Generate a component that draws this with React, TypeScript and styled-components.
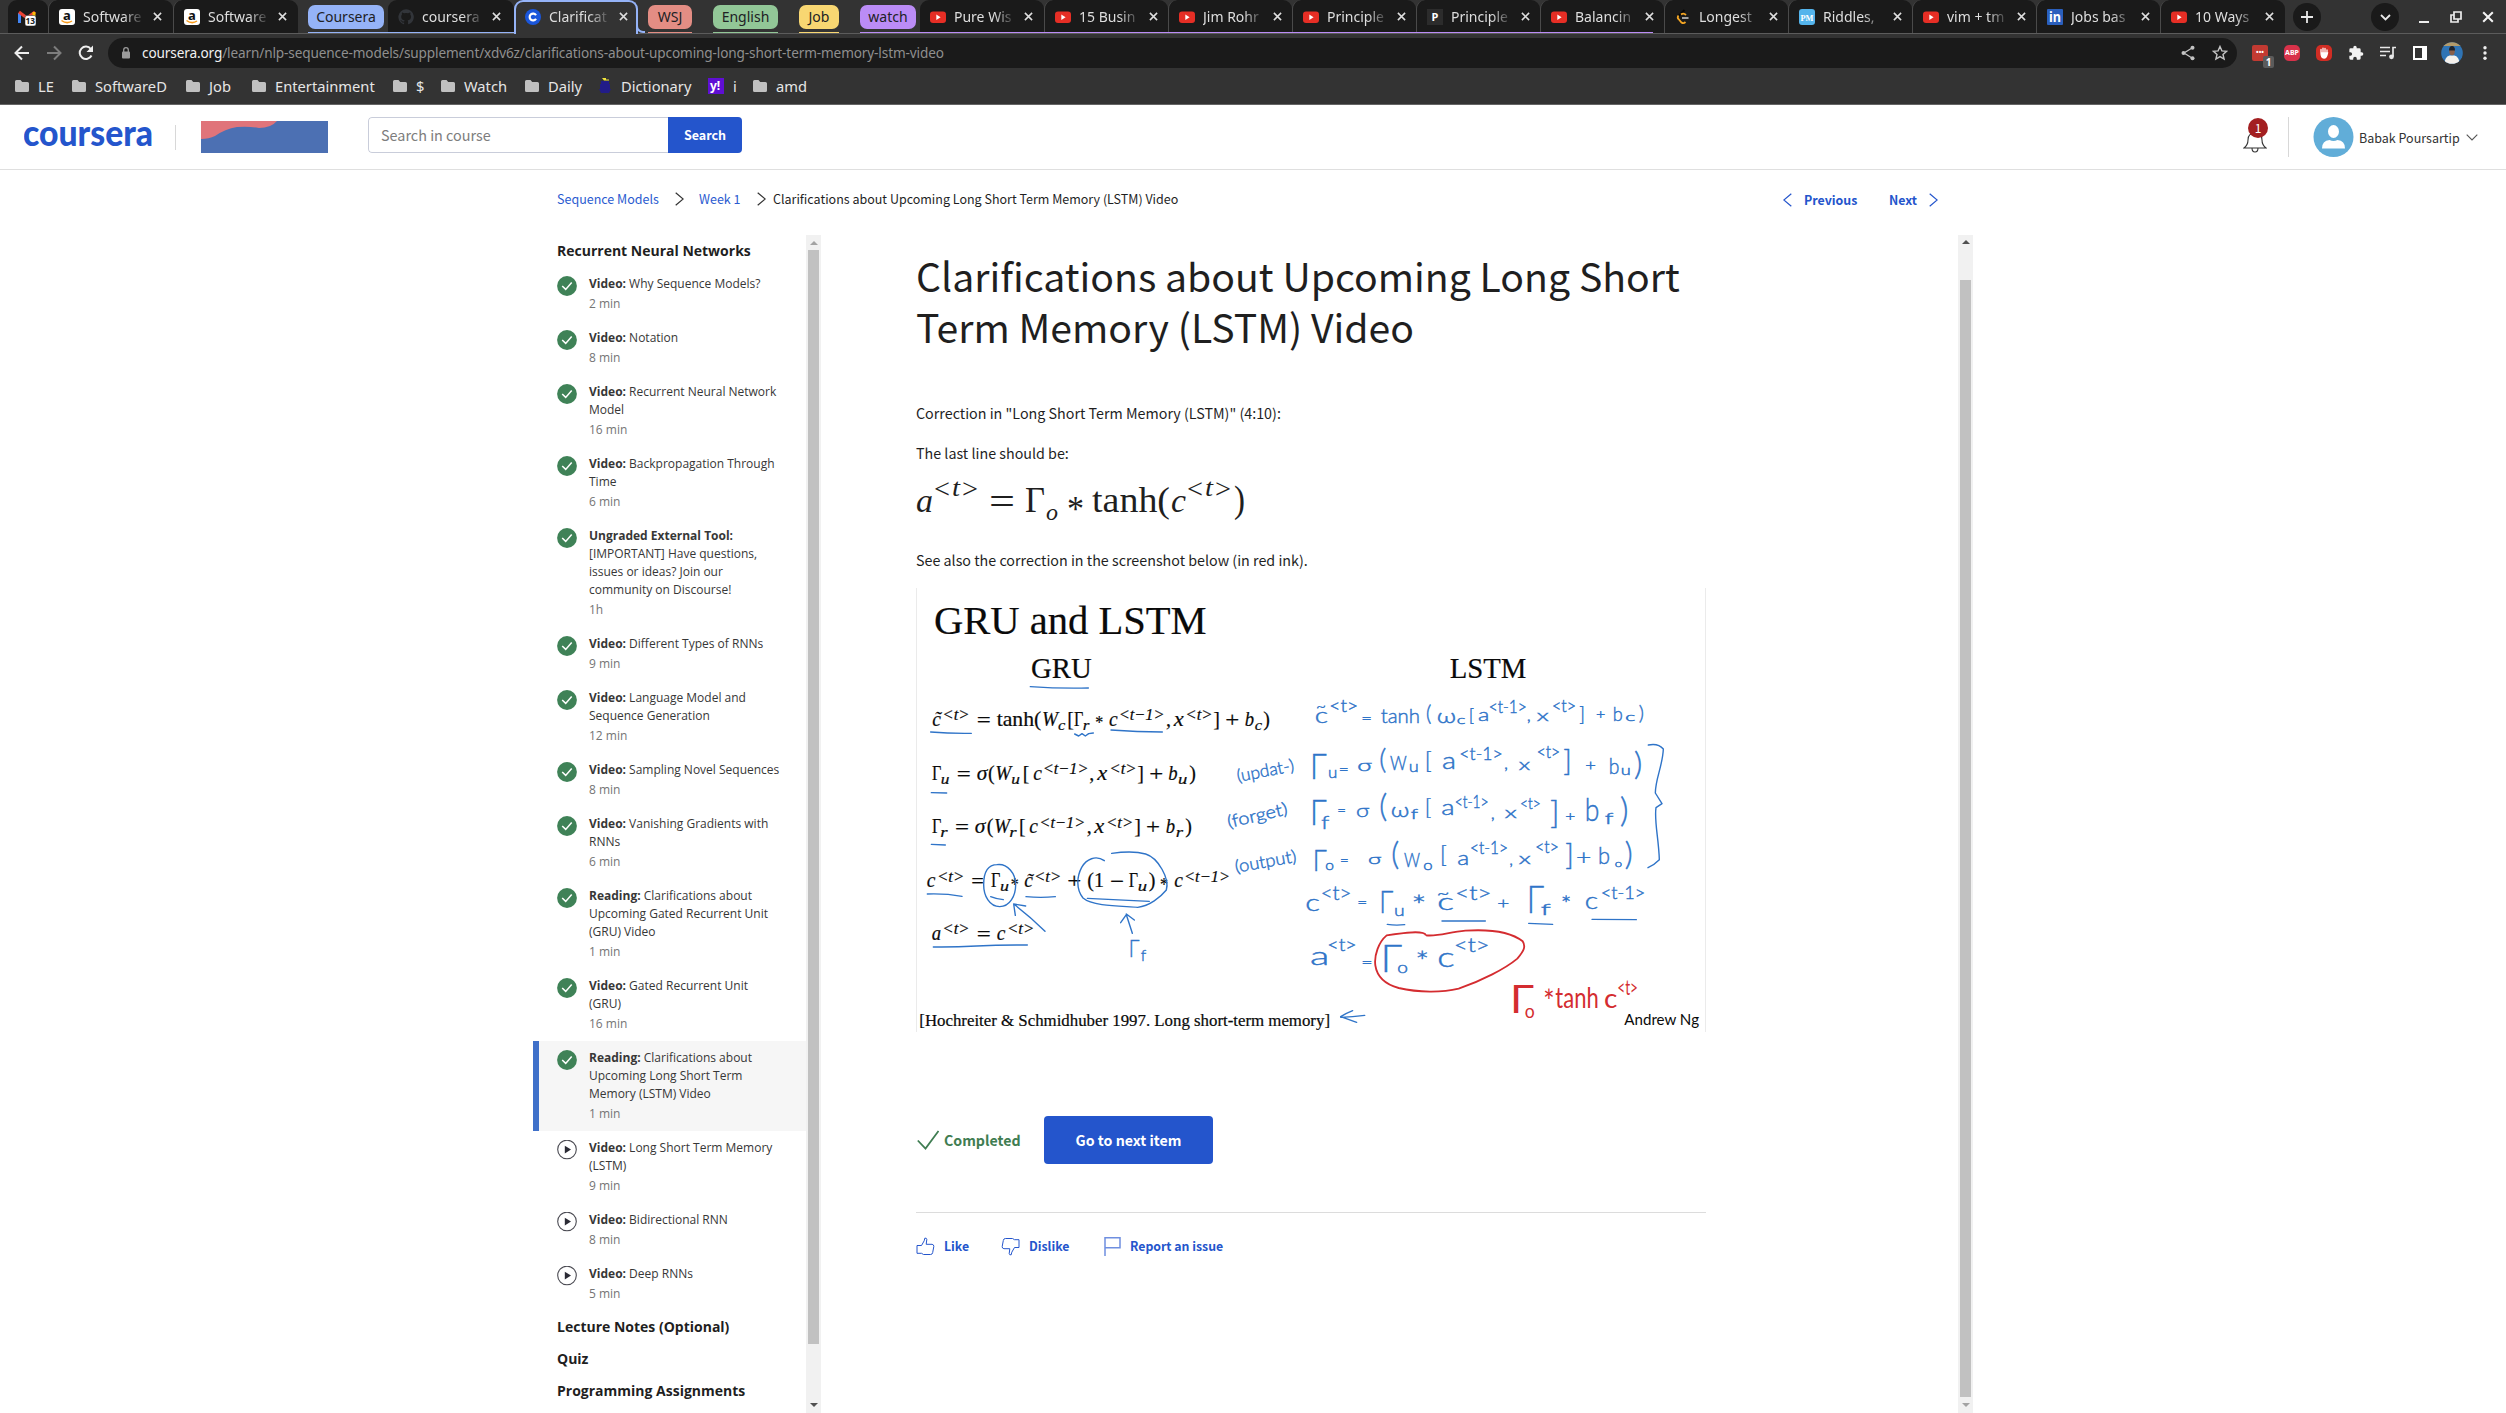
import React from 'react';
import styled, { createGlobalStyle } from 'styled-components';

const SOURCE = `'Noto Sans CJK SC', 'Open Sans', sans-serif`;
const OPEN = `'Open Sans', 'Noto Sans', sans-serif`;
const CHROME = `'Noto Sans', 'Open Sans', sans-serif`;
const SERIF = `'Liberation Serif', serif`;
const HAND = `Lato, 'Open Sans', sans-serif`;

const Global = createGlobalStyle`
  * { box-sizing: border-box; }
  body { margin: 0; background: #fff; overflow: hidden; }
  svg { display: block; flex: none; }
`;

const Page = styled.div`
  width: 2506px;
  height: 1413px;
  display: flex;
  flex-direction: column;
  overflow: hidden;
  background: #fff;
  color: #1f1f1f;
  font-family: ${SOURCE};
`;

/* ---------- browser chrome ---------- */

const Chrome = styled.div`
  height: 105px;
  flex: none;
  background: #333;
  border-bottom: 1px solid #656565;
  font-family: ${CHROME};
`;

const TabStrip = styled.div`
  height: 34px;
  display: flex;
  padding-left: 8px;
  border-bottom: 1px solid #5c5c5c;
`;

const TabBox = styled.div<{ $w: number; $active?: boolean; $first?: boolean }>`
  position: relative;
  width: ${p => p.$w}px;
  height: ${p => (p.$active ? 34 : 33)}px;
  flex: none;
  display: flex;
  align-items: center;
  padding: 0 0 ${p => (p.$active ? 3 : 0)}px ${p => (p.$active ? 9 : 10)}px;
  background: ${p => (p.$active ? '#333' : '#1a1a1a')};
  border: ${p => (p.$active ? '2px solid #95b3f7' : '0')};
  border-bottom: 0;
  border-radius: 9px 9px 0 0;
  border-left: ${p => (p.$active ? '2px solid #95b3f7' : p.$first ? '0' : '1px solid #4a4a4a')};
  z-index: ${p => (p.$active ? 2 : 0)};
`;

const TabTitle = styled.span`
  width: 62px;
  margin-left: 8px;
  overflow: hidden;
  white-space: nowrap;
  color: #dedede;
  font-size: 14px;
  line-height: 20px;
  mask-image: linear-gradient(90deg, #000 65%, transparent 100%);
`;

const TabClose = styled.span`
  display: flex;
  margin-left: 8px;
`;

const Group = styled.div<{ $ml: number; $bar: number; $c: string }>`
  position: relative;
  display: flex;
  margin-left: ${p => p.$ml}px;
  height: 33px;
  &::after {
    content: '';
    position: absolute;
    left: 0;
    bottom: 0;
    height: 1.5px;
    width: ${p => p.$bar}px;
    background: ${p => p.$c};
    z-index: 1;
  }
`;

const Chip = styled.span<{ $w: number; $c: string; $gap?: number }>`
  width: ${p => p.$w}px;
  height: 24px;
  margin: 5px ${p => p.$gap || 0}px 0 0;
  flex: none;
  border-radius: 7px;
  background: ${p => p.$c};
  color: #202124;
  font-size: 14px;
  line-height: 24px;
  text-align: center;
`;

const Foot = styled.span`
  width: 9px;
  height: 8px;
  align-self: flex-end;
  border-left: 2px solid #95b3f7;
  border-bottom: 2px solid #95b3f7;
  border-radius: 0 0 0 7px;
  margin-left: -2px;
`;

const Round = styled.span<{ $ml: number }>`
  width: 28px;
  height: 28px;
  margin: 3px 0 0 ${p => p.$ml}px;
  border-radius: 50%;
  background: #1a1a1a;
  display: flex;
  align-items: center;
  justify-content: center;
`;

const WindowIcons = styled.div`
  display: flex;
  align-items: center;
  gap: 20px;
  margin-left: 19px;
`;

const Toolbar = styled.div`
  height: 38px;
  display: flex;
  align-items: center;
  padding: 0 12px 0 12px;
`;

const NavIcons = styled.div`
  width: 96px;
  display: flex;
  gap: 12px;
`;

const Omnibox = styled.div`
  width: 2129px;
  height: 30px;
  border-radius: 15px;
  background: #1a1a1a;
  display: flex;
  align-items: center;
  padding: 0 9px 0 13px;
  color: #8f8f8f;
  font-size: 13.6px;
  line-height: 20px;
  b { color: #f1f1f1; font-weight: 400; }
`;

const UrlText = styled.span`
  margin-left: 11px;
  flex: 1;
  letter-spacing: -0.125px;
`;

const PillIcons = styled.div`
  display: flex;
  gap: 16px;
`;

const Extensions = styled.div`
  display: flex;
  align-items: center;
  margin-left: 15px;
  gap: 16px;
`;

const Ext = styled.span<{ $bg?: string; $r?: number }>`
  position: relative;
  width: 16px;
  height: 16px;
  border-radius: ${p => p.$r || 0}px;
  background: ${p => p.$bg || 'transparent'};
  color: #fff;
  font: 700 7px/16px ${CHROME};
  text-align: center;
`;

const ExtBadge = styled.span`
  position: absolute;
  right: -6px;
  bottom: -7px;
  width: 11px;
  height: 12px;
  border-radius: 2px;
  background: #5b5b5b;
  font: 700 10px/12px ${CHROME};
`;

const ProfileIcons = styled.div`
  display: flex;
  align-items: center;
  gap: 14px;
  margin-left: -3px;
`;

const Bookmarks = styled.div`
  height: 28px;
  display: flex;
  align-items: center;
  padding: 0 0 0 15px;
  color: #e6e6e6;
  font-size: 14.7px;
  line-height: 20px;
`;

const Bookmark = styled.span<{ $w: number }>`
  width: ${p => p.$w}px;
  display: flex;
  align-items: center;
  gap: 9px;
  white-space: nowrap;
`;

/* ---------- site header ---------- */

const SiteHeader = styled.header`
  height: 65px;
  flex: none;
  display: flex;
  align-items: center;
  padding: 0 28px 0 24px;
  border-bottom: 1px solid #dfdfdf;
`;

const VLine = styled.span<{ $h: number; $ml: number; $mr: number }>`
  width: 1px;
  height: ${p => p.$h}px;
  background: #d8d8d8;
  margin: 0 ${p => p.$mr}px 0 ${p => p.$ml}px;
`;

const SearchForm = styled.div`
  display: flex;
  width: 374px;
  height: 36px;
  margin: 0 0 4px 40px;
  border-radius: 4px;
  overflow: hidden;
`;

const SearchInput = styled.div`
  width: 300px;
  border: 1px solid #c9cdda;
  border-right: 0;
  border-radius: 4px 0 0 4px;
  padding-left: 12px;
  color: #7d7d7d;
  font-size: 14.4px;
  line-height: 33px;
`;

const SearchButton = styled.div`
  flex: 1;
  background: #2455cc;
  color: #fff;
  font-size: 12.5px;
  font-weight: 700;
  line-height: 35px;
  text-align: center;
`;

const HeaderRight = styled.div`
  margin-left: auto;
  display: flex;
  align-items: center;
`;

const Bell = styled.div`
  position: relative;
  width: 24px;
  height: 40px;
  padding-top: 10px;
`;

const BellBadge = styled.span`
  position: absolute;
  left: 5px;
  top: 1px;
  width: 20px;
  height: 20px;
  border-radius: 50%;
  background: #a31f21;
  color: #fff;
  font-size: 12px;
  line-height: 19px;
  text-align: center;
`;

const UserName = styled.span`
  width: 101px;
  margin: 2px 6px 0 5px;
  white-space: nowrap;
  color: #333;
  font-size: 12.5px;
  line-height: 20px;
`;

/* ---------- course body ---------- */

const CrumbBar = styled.div`
  height: 65px;
  flex: none;
  display: flex;
  align-items: center;
  padding: 0 568px 7px 557px;
  font-size: 12.5px;
  line-height: 20px;
  white-space: nowrap;
`;

const Crumb = styled.span<{ $w: number; $link?: boolean }>`
  width: ${p => p.$w}px;
  color: ${p => (p.$link ? '#2a5bd0' : '#1f1f1f')};
`;

const CrumbSep = styled.span<{ $ml: number; $mr: number }>`
  margin: 0 ${p => p.$mr}px 0 ${p => p.$ml}px;
`;

const Pager = styled.div`
  display: flex;
  align-items: center;
  margin: 1px 0 0 auto;
  color: #2455cc;
  font-size: 12.4px;
  font-weight: 700;
`;

const PagerText = styled.span<{ $w: number; $ml: number; $mr: number }>`
  width: ${p => p.$w}px;
  margin: 0 ${p => p.$mr}px 0 ${p => p.$ml}px;
`;

const Columns = styled.div`
  flex: 1;
  min-height: 0;
  display: flex;
  padding-left: 533px;
`;

const Sidebar = styled.nav`
  width: 273px;
  font-family: ${OPEN};
`;

const SectionTitle = styled.div`
  height: 32px;
  padding-left: 24px;
  color: #1f1f1f;
  font-size: 14px;
  font-weight: 700;
  line-height: 32px;
  white-space: nowrap;
`;

const Item = styled.div<{ $active?: boolean }>`
  display: flex;
  align-items: flex-start;
  padding: 8px 0 8px 18px;
  border-left: 6px solid ${p => (p.$active ? '#3f70c9' : 'transparent')};
  background: ${p => (p.$active ? '#f6f6f6' : 'transparent')};
  background-clip: padding-box;
  svg { margin-top: 1px; }
`;

const ItemText = styled.div`
  margin-left: 12px;
  color: #373737;
  font-size: 12px;
  line-height: 18px;
  white-space: nowrap;
`;

const Line = styled.div`
  height: 18px;
`;

const Duration = styled.div`
  margin-top: 2px;
  color: #757575;
`;

const Track = styled.div`
  width: 15px;
  height: 1178px;
  flex: none;
  display: flex;
  flex-direction: column;
  align-items: center;
  background: #f1f1f1;
`;

const Thumb = styled.div<{ $mt: number; $h: number }>`
  width: 11px;
  height: ${p => p.$h}px;
  margin-top: ${p => p.$mt}px;
  background: #c1c1c1;
`;

const ArrowBox = styled.div<{ $bottom?: boolean }>`
  height: 15px;
  margin: ${p => (p.$bottom ? 'auto 0 1px' : '0')};
  display: flex;
  align-items: center;
`;

const Main = styled.main`
  width: 1137px;
  padding: 15px 252px 0 95px;
`;

const Title = styled.h1`
  margin: 0;
  color: #1f1f1f;
  font-size: 39.2px;
  font-weight: 400;
  line-height: 51px;
  white-space: nowrap;
`;

const Para = styled.p<{ $mt: number }>`
  margin: ${p => p.$mt}px 0 0;
  font-size: 14.3px;
  line-height: 20px;
  white-space: nowrap;
`;

const FormulaBox = styled.div`
  margin-top: 8px;
  height: 69px;
`;

const SlideFrame = styled.div`
  width: 790px;
  height: 444px;
  margin-top: 18px;
  border-left: 1px solid #ebebeb;
  border-right: 1px solid #ebebeb;
`;

const Actions = styled.div`
  height: 48px;
  margin-top: 84px;
  display: flex;
  align-items: center;
  padding-left: 1px;
`;

const Done = styled.span`
  width: 100px;
  margin-left: 5px;
  color: #3f7d52;
  font-size: 14.2px;
  font-weight: 700;
  line-height: 20px;
`;

const NextButton = styled.div`
  width: 169px;
  height: 48px;
  border-radius: 4px;
  background: #2455cc;
  color: #fff;
  font-size: 14.2px;
  font-weight: 700;
  line-height: 48px;
  text-align: center;
`;

const Feedback = styled.div`
  margin-top: 48px;
  border-top: 1px solid #dcdcdc;
  padding: 23px 0 0 0;
  display: flex;
  color: #2455cc;
  font-size: 12.3px;
  font-weight: 700;
  line-height: 20px;
`;

const FeedbackItem = styled.span<{ $w: number; $gap: number }>`
  width: ${p => p.$w}px;
  display: flex;
  align-items: center;
  gap: ${p => p.$gap}px;
  white-space: nowrap;
`;

/* ---------- small icons ---------- */

const CloseIcon = ({ size = 9, color = '#dedede' }: { size?: number; color?: string }) => (
  <svg width={size} height={size} viewBox="0 0 10 10"><path d="M1 1l8 8M9 1L1 9" stroke={color} strokeWidth="1.7" /></svg>
);

const favicons: Record<string, React.ReactNode> = {
  gmail: (
    <svg width="18" height="18" viewBox="0 0 18 18">
      <path d="M1.500 15V5" stroke="#4285f4" strokeWidth="3" />
      <path d="M1 4l8 6 8-6" fill="none" stroke="#ea4335" strokeWidth="3" />
      <path d="M16 8V4" stroke="#fbbc04" strokeWidth="3" />
      <rect x="7" y="7.500" width="11" height="10.500" rx="2" fill="#fff" stroke="#222" strokeWidth=".5" />
      <text x="7.600" y="16.200" fontSize="9" fontWeight="700" fontFamily={CHROME} textLength="9.500" lengthAdjust="spacingAndGlyphs" fill="#222">13</text>
    </svg>
  ),
  amazon: (
    <svg width="16" height="16" viewBox="0 0 16 16">
      <rect width="16" height="16" rx="3" fill="#fff" />
      <text x="4" y="11" fontSize="13" fontWeight="700" fontFamily={CHROME} fill="#111">a</text>
      <path d="M2.500 11.500q5.500 4 10.500.5" fill="none" stroke="#f79a1c" strokeWidth="1.500" />
    </svg>
  ),
  github: (
    <svg width="16" height="16" viewBox="0 0 24 24" fill="#32353a">
      <path d="M12 .5A11.500 11.500 0 0 0 8.400 22.900c.6.100.8-.3.800-.6v-2c-3.200.7-3.900-1.500-3.900-1.500-.5-1.300-1.300-1.700-1.300-1.700-1-.7.100-.7.100-.7 1.200.100 1.800 1.200 1.800 1.200 1 1.800 2.700 1.300 3.400 1 .1-.8.400-1.300.7-1.600-2.500-.3-5.200-1.300-5.200-5.700 0-1.300.4-2.300 1.200-3.100-.1-.3-.5-1.500.1-3.100 0 0 1-.3 3.200 1.200a11 11 0 0 1 5.800 0c2.200-1.500 3.200-1.200 3.200-1.200.6 1.600.2 2.800.1 3.100.7.800 1.200 1.800 1.200 3.100 0 4.400-2.700 5.400-5.300 5.700.4.400.8 1.100.8 2.200v3.100c0 .3.200.7.800.6A11.500 11.500 0 0 0 12 .5" />
    </svg>
  ),
  coursera: (
    <svg width="16" height="16" viewBox="0 0 16 16">
      <circle cx="8" cy="8" r="8" fill="#1a56db" />
      <path d="M11 6.300A3.400 3.400 0 1 0 11 9.700" fill="none" stroke="#fff" strokeWidth="2.200" />
    </svg>
  ),
  youtube: (
    <svg width="16" height="16" viewBox="0 0 16 16">
      <rect y="2.500" width="16" height="11.500" rx="3" fill="#e62e25" />
      <path d="M6.300 5.500v5.400l4.300-2.700z" fill="#fff" />
    </svg>
  ),
  p: (
    <svg width="16" height="16" viewBox="0 0 16 16">
      <rect width="16" height="16" fill="#2c2c2c" />
      <text x="4.500" y="12" fontSize="11" fontWeight="700" fontFamily={CHROME} fill="#fff">P</text>
    </svg>
  ),
  leetcode: (
    <svg width="16" height="16" viewBox="0 0 16 16" fill="none" strokeWidth="1.800">
      <path d="M9.500 1L3.500 7" stroke="#070707" />
      <path d="M3.500 6.500q-1.500 2 0 3.500l3 3.500q2 1.500 4-.5M6 5.500q2.500-2 5 .5" stroke="#f5a623" />
      <path d="M7 9h6.500" stroke="#b3b3b3" />
    </svg>
  ),
  pm: (
    <svg width="16" height="16" viewBox="0 0 16 16">
      <rect width="16" height="16" rx="3" fill="#54b4ec" />
      <text x="1.500" y="11.500" fontSize="9" fontWeight="700" fontFamily={SERIF} fill="#fff" textLength="13" lengthAdjust="spacingAndGlyphs">PM</text>
    </svg>
  ),
  linkedin: (
    <svg width="16" height="16" viewBox="0 0 16 16">
      <rect width="16" height="16" rx="1" fill="#2a5fbd" />
      <text x="2" y="13" fontSize="14" fontWeight="700" fontFamily={CHROME} fill="#fff" textLength="12" lengthAdjust="spacingAndGlyphs">in</text>
    </svg>
  ),
};

const FolderIcon = () => (
  <svg width="14" height="12" viewBox="0 0 14 12"><path d="M0 1.500Q0 0 1.500 0h4l1.700 2H12.500Q14 2 14 3.500v7Q14 12 12.500 12h-11Q0 12 0 10.500z" fill="#c0c0c0" /></svg>
);

const ShipIcon = () => (
  <svg width="14" height="16" viewBox="0 0 14 16">
    <path d="M3 3h8v3h1v5h1l-2 4H3l-2-4h1V6h1z" fill="#221c88" />
    <path d="M4 0h4v1.500h3v1H6" fill="#f2e53b" />
  </svg>
);

const YahooIcon = () => (
  <svg width="16" height="16" viewBox="0 0 16 16">
    <rect width="16" height="16" fill="#5f0fd4" />
    <text x="2" y="11.500" fontSize="12" fontWeight="700" fontFamily={CHROME} fill="#fff">y!</text>
  </svg>
);

const Chevron = ({ w, h, left, color, sw = 1.2 }: { w: number; h: number; left?: boolean; color: string; sw?: number }) => (
  <svg width={w} height={h} viewBox={`0 0 ${w} ${h}`}>
    <path d={left ? `M${w - 0.7} .7L.8 ${h / 2}L${w - 0.7} ${h - 0.7}` : `M.7 .7L${w - 0.8} ${h / 2}L.7 ${h - 0.7}`} fill="none" stroke={color} strokeWidth={sw} />
  </svg>
);

const CheckDisc = () => (
  <svg width="20" height="20" viewBox="0 0 20 20">
    <circle cx="10" cy="10" r="9.900" fill="#3f8257" />
    <path d="M5.200 10l3.500 3.400 6-7" fill="none" stroke="#fff" strokeWidth="1.500" />
  </svg>
);

const PlayDisc = () => (
  <svg width="20" height="20" viewBox="0 0 20 20">
    <circle cx="10" cy="9.500" r="9.300" fill="#fff" stroke="#4a4a52" strokeWidth="1.100" />
    <path d="M7.800 5.800v7.600l6.200-3.800z" fill="#2b2b35" />
  </svg>
);

const ScrollArrow = ({ down, color }: { down?: boolean; color: string }) => (
  <svg width="8" height="4" viewBox="0 0 8 4"><path d={down ? 'M0 0h8L4 4z' : 'M0 4h8L4 0z'} fill={color} /></svg>
);

const ThumbIcon = ({ down }: { down?: boolean }) => (
  <svg width="19" height="19" viewBox="0 0 19 19" fill="none" stroke="#2455cc" strokeWidth="1">
    <path transform={down ? 'matrix(1 0 0 -1 0 19) matrix(-1 0 0 1 19 0)' : undefined} d="M1 8.500h4.500l2.700-4.700.6-2.600q1.700-.5 2 1.100l-.6 5h5.900q1.900.3 1.700 2.200l-1.100 6q-.3 2-2.100 2H7.500l-2-1.200H1z" />
  </svg>
);

const FlagIcon = () => (
  <svg width="17" height="19" viewBox="0 0 17 19"><path d="M1 19V.8h15v10H1" fill="none" stroke="#6f8fe0" strokeWidth="1.500" /></svg>
);

/* ---------- tabs ---------- */

type TabProps = { icon: string; title: string; w?: number; active?: boolean; first?: boolean };

const Tab = ({ icon, title, w = 124, active, first }: TabProps) => (
  <TabBox $w={w} $active={active} $first={first}>
    {favicons[icon]}
    <TabTitle>{title}</TabTitle>
    <TabClose><CloseIcon /></TabClose>
  </TabBox>
);

const bookmarks: { label: string; w: number; icon?: React.ReactNode }[] = [
  { label: 'LE', w: 57 },
  { label: 'SoftwareD', w: 114 },
  { label: 'Job', w: 66 },
  { label: 'Entertainment', w: 141 },
  { label: '$', w: 48 },
  { label: 'Watch', w: 84 },
  { label: 'Daily', w: 73 },
  { label: 'Dictionary', w: 110, icon: <ShipIcon /> },
  { label: 'i', w: 45, icon: <YahooIcon /> },
  { label: 'amd', w: 60 },
];

const BrowserChrome = () => (
  <Chrome>
    <TabStrip>
      <TabBox $w={40} $first>{favicons.gmail}</TabBox>
      <Tab icon="amazon" title="Software" w={125} />
      <Tab icon="amazon" title="Software" w={125} />
      <Group $ml={10} $bar={206} $c="#95b3f7">
        <Chip $w={76} $c="#95b3f7" $gap={4}>Coursera</Chip>
        <Tab icon="github" title="coursera" w={126} first />
        <Tab icon="coursera" title="Clarificat" active />
        <Foot />
      </Group>
      <Group $ml={3} $bar={44} $c="#e38d84"><Chip $w={44} $c="#e38d84">WSJ</Chip></Group>
      <Group $ml={21} $bar={65} $c="#92c797"><Chip $w={65} $c="#92c797">English</Chip></Group>
      <Group $ml={21} $bar={40} $c="#f8d772"><Chip $w={40} $c="#f8d772">Job</Chip></Group>
      <Group $ml={21} $bar={793} $c="#bb8cf6">
        <Chip $w={56} $c="#bb8cf6" $gap={4}>watch</Chip>
        <Tab icon="youtube" title="Pure Wis" first />
        <Tab icon="youtube" title="15 Busin" />
        <Tab icon="youtube" title="Jim Rohr" />
        <Tab icon="youtube" title="Principle" />
        <Tab icon="p" title="Principle" />
        <Tab icon="youtube" title="Balancin" />
      </Group>
      <Tab icon="leetcode" title="Longest" />
      <Tab icon="pm" title="Riddles," />
      <Tab icon="youtube" title="vim + tm" />
      <Tab icon="linkedin" title="Jobs bas" />
      <Tab icon="youtube" title="10 Ways" w={125} />
      <Round $ml={8}>
        <svg width="12" height="12" viewBox="0 0 12 12"><path d="M6 0v12M0 6h12" stroke="#e8e8e8" strokeWidth="1.800" /></svg>
      </Round>
      <Round $ml={50}>
        <svg width="11" height="7" viewBox="0 0 11 7"><path d="M1 1l4.500 4.500L10 1" fill="none" stroke="#e8e8e8" strokeWidth="1.800" /></svg>
      </Round>
      <WindowIcons>
        <svg width="12" height="12" viewBox="0 0 12 12"><path d="M1 11h10" stroke="#eee" strokeWidth="2" /></svg>
        <svg width="12" height="12" viewBox="0 0 12 12"><path d="M4 1h7v7H4zM4 4H1v7h7V8" fill="none" stroke="#eee" strokeWidth="1.700" /></svg>
        <CloseIcon size={12} color="#f4f4f4" />
      </WindowIcons>
    </TabStrip>
    <Toolbar>
      <NavIcons>
        <svg width="20" height="20" viewBox="0 0 20 20"><path d="M17 10H4M10 3.500L3.500 10l6.500 6.500" fill="none" stroke="#eee" strokeWidth="2" /></svg>
        <svg width="20" height="20" viewBox="0 0 20 20"><path d="M3 10h13M10 3.500L16.500 10 10 16.500" fill="none" stroke="#7d7d7d" strokeWidth="2" /></svg>
        <svg width="20" height="20" viewBox="0 0 20 20"><path d="M15.500 12.500A6.200 6.200 0 1 1 14.800 6" fill="none" stroke="#eee" strokeWidth="2" /><path d="M17 2.500V9h-6.500z" fill="#eee" /></svg>
      </NavIcons>
      <Omnibox>
        <svg width="10" height="13" viewBox="0 0 10 13"><rect y="4.500" x="1" width="8" height="7" rx="1" fill="#9b9b9b" /><path d="M2.700 5V3a2.300 2.300 0 0 1 4.600 0v2" fill="none" stroke="#9b9b9b" strokeWidth="1.300" /></svg>
        <UrlText><b>coursera.org</b>/learn/nlp-sequence-models/supplement/xdv6z/clarifications-about-upcoming-long-short-term-memory-lstm-video</UrlText>
        <PillIcons>
          <svg width="16" height="16" viewBox="0 0 16 16"><path d="M12 3L4 8l8 5" fill="none" stroke="#c4c4c4" strokeWidth="1.300" /><g fill="#c4c4c4"><circle cx="12.500" cy="2.800" r="2" /><circle cx="3.500" cy="8" r="2" /><circle cx="12.500" cy="13.200" r="2" /></g></svg>
          <svg width="16" height="16" viewBox="0 0 16 16"><path d="M8 1.500l1.900 4.400 4.700.4-3.600 3.100 1.100 4.700L8 11.600l-4.100 2.500L5 9.400 1.400 6.300l4.700-.4z" fill="none" stroke="#c4c4c4" strokeWidth="1.400" /></svg>
        </PillIcons>
      </Omnibox>
      <Extensions>
        <Ext $bg="#c23a32" $r={2}>•••<ExtBadge>1</ExtBadge></Ext>
        <Ext $bg="#d8324a" $r={5}>ABP</Ext>
        <Ext $bg="#d12d24" $r={5}>
          <svg width="16" height="16" viewBox="0 0 16 16"><path d="M5 8V4.500M7 7.500V3.200M9 7.500V3.500M11 8V5M5 8q0 5 3 5 2.500 0 3.500-5z" fill="#fff" stroke="#fff" strokeWidth="1.300" strokeLinecap="round" /></svg>
        </Ext>
        <svg width="16" height="16" viewBox="0 0 24 24"><path fill="#f2f2f2" d="M20.500 11H19V7a2 2 0 0 0-2-2h-4V3.500a2.500 2.500 0 0 0-5 0V5H4a2 2 0 0 0-2 2v3.800h1.500a2.700 2.700 0 0 1 0 5.400H2V20a2 2 0 0 0 2 2h3.800v-1.500a2.700 2.700 0 0 1 5.400 0V22H17a2 2 0 0 0 2-2v-4h1.500a2.500 2.500 0 0 0 0-5" /></svg>
        <svg width="16" height="16" viewBox="0 0 16 16"><path d="M0 2.500h10M0 6.500h10M0 10.500h6M16 2.500h-3v9" fill="none" stroke="#e8e8e8" strokeWidth="1.700" /><circle cx="11.500" cy="11.800" r="2.400" fill="#e8e8e8" /></svg>
        <svg width="16" height="16" viewBox="0 0 16 16"><path d="M2 2h12v12H2z" fill="none" stroke="#fff" strokeWidth="2" /><path d="M10 2h4v12h-4z" fill="#fff" /></svg>
        <ProfileIcons>
          <svg width="22" height="22" viewBox="0 0 22 22">
            <defs><clipPath id="me"><circle cx="11" cy="11" r="10.800" /></clipPath></defs>
            <g clipPath="url(#me)">
              <rect width="22" height="22" fill="#2f74b5" />
              <rect width="22" height="4" fill="#b39a6a" />
              <path d="M3.500 22q0-7 5-8.500h5q5 1.500 5 8.500z" fill="#f5f1ec" />
              <ellipse cx="11" cy="9" rx="2.800" ry="4.200" fill="#8a5f49" />
              <path d="M8 8.500Q8 4 11 4t3 4.500z" fill="#20242b" />
            </g>
          </svg>
          <svg width="16" height="16" viewBox="0 0 16 16" fill="#eee"><circle cx="8" cy="2.800" r="1.700" /><circle cx="8" cy="8" r="1.700" /><circle cx="8" cy="13.200" r="1.700" /></svg>
        </ProfileIcons>
      </Extensions>
    </Toolbar>
    <Bookmarks>
      {bookmarks.map(b => (
        <Bookmark key={b.label} $w={b.w}>{b.icon || <FolderIcon />}{b.label}</Bookmark>
      ))}
    </Bookmarks>
  </Chrome>
);

/* ---------- sidebar data ---------- */

type Lesson = { kind: string; lines: string[]; time: string; todo?: boolean; active?: boolean };

const lessons: Lesson[] = [
  { kind: 'Video:', lines: ['Why Sequence Models?'], time: '2 min' },
  { kind: 'Video:', lines: ['Notation'], time: '8 min' },
  { kind: 'Video:', lines: ['Recurrent Neural Network', 'Model'], time: '16 min' },
  { kind: 'Video:', lines: ['Backpropagation Through', 'Time'], time: '6 min' },
  { kind: 'Ungraded External Tool:', lines: ['', '[IMPORTANT] Have questions,', 'issues or ideas? Join our', 'community on Discourse!'], time: '1h' },
  { kind: 'Video:', lines: ['Different Types of RNNs'], time: '9 min' },
  { kind: 'Video:', lines: ['Language Model and', 'Sequence Generation'], time: '12 min' },
  { kind: 'Video:', lines: ['Sampling Novel Sequences'], time: '8 min' },
  { kind: 'Video:', lines: ['Vanishing Gradients with', 'RNNs'], time: '6 min' },
  { kind: 'Reading:', lines: ['Clarifications about', 'Upcoming Gated Recurrent Unit', '(GRU) Video'], time: '1 min' },
  { kind: 'Video:', lines: ['Gated Recurrent Unit', '(GRU)'], time: '16 min' },
  { kind: 'Reading:', lines: ['Clarifications about', 'Upcoming Long Short Term', 'Memory (LSTM) Video'], time: '1 min', active: true },
  { kind: 'Video:', lines: ['Long Short Term Memory', '(LSTM)'], time: '9 min', todo: true },
  { kind: 'Video:', lines: ['Bidirectional RNN'], time: '8 min', todo: true },
  { kind: 'Video:', lines: ['Deep RNNs'], time: '5 min', todo: true },
];

/* ---------- formulas and slide ---------- */

/* [text, x, baseline, width (0 = natural), size, style] where style i = italic, n = upright */
type Token = [string, number, number, number, number, ('i' | 'n')?];

type GlyphsProps = { tokens: Token[]; font: string; fill: string; dx?: number; weight?: number; pen?: number };

const Glyphs = ({ tokens, font, fill, dx = 0, weight = 400, pen = 0 }: GlyphsProps) => (
  <g fontFamily={font} fill={fill} fontWeight={weight} stroke={pen ? fill : 'none'} strokeWidth={pen}>
    {tokens.map(([t, x, y, w, s, k], i) => (
      <text
        key={i}
        x={x + dx}
        y={y}
        fontSize={s}
        fontStyle={k === 'i' ? 'italic' : 'normal'}
        textLength={w || undefined}
        lengthAdjust={w ? 'spacingAndGlyphs' : undefined}
      >
        {t}
      </text>
    ))}
  </g>
);

const formula: Token[] = [
  ['a', 0, 41, 17, 34, 'i'], ['<', 18, 27, 16, 27], ['t', 36, 25, 8, 26, 'i'], ['>', 46, 27, 16, 27],
  ['=', 73, 43, 26, 38], ['Γ', 109, 41, 20, 35], ['o', 130, 49, 12, 24, 'i'], ['*', 151, 50, 17, 36],
  ['tanh(', 176, 41, 78, 36], ['c', 255, 41, 15, 34, 'i'],
  ['<', 271, 27, 16, 27], ['t', 289, 25, 8, 26, 'i'], ['>', 299, 27, 16, 27], [')', 318, 41, 11, 38],
];

const printed: Token[] = [
  ['GRU and LSTM', 102, 163, 818, 122], ['GRU', 393, 295, 182, 91], ['LSTM', 1649, 295, 230, 91],
  ['c̃', 97, 438, 26, 62, 'i'], ['<t>', 127, 421, 82, 50, 'i'], ['=', 230, 440, 42, 62], ['tanh(', 290, 438, 134, 62],
  ['W', 426, 438, 48, 60, 'i'], ['c', 474, 450, 22, 46, 'i'], ['[', 502, 438, 0, 60], ['Γ', 522, 438, 28, 62],
  ['r', 548, 450, 20, 46, 'i'], ['*', 586, 448, 24, 56], ['c', 627, 438, 26, 62, 'i'], ['<t−1>', 656, 421, 138, 50, 'i'],
  [',', 798, 438, 0, 60], ['x', 821, 438, 30, 62, 'i'], ['<t>', 856, 421, 82, 50, 'i'], [']', 940, 438, 0, 60],
  ['+', 976, 440, 42, 62], ['b', 1034, 438, 28, 62, 'i'], ['c', 1064, 450, 22, 46, 'i'], [')', 1090, 438, 0, 60],

  ['Γ', 96, 600, 28, 62], ['u', 122, 611, 26, 46, 'i'], ['=', 170, 602, 42, 62], ['σ', 230, 600, 32, 62, 'i'], ['(', 264, 600, 0, 60],
  ['W', 286, 600, 48, 60, 'i'], ['u', 334, 611, 26, 46, 'i'], ['[', 368, 600, 0, 60], ['c', 400, 600, 26, 62, 'i'],
  ['<t−1>', 428, 583, 138, 50, 'i'], [',', 568, 600, 0, 60], ['x', 592, 600, 30, 62, 'i'], ['<t>', 628, 583, 82, 50, 'i'],
  [']', 712, 600, 0, 60], ['+', 748, 602, 42, 62], ['b', 805, 600, 28, 62, 'i'], ['u', 834, 611, 28, 46, 'i'], [')', 868, 600, 0, 60],

  ['Γ', 96, 760, 28, 62], ['r', 121, 771, 22, 46, 'i'], ['=', 165, 762, 42, 62], ['σ', 224, 760, 32, 62, 'i'], ['(', 260, 760, 0, 60],
  ['W', 282, 760, 48, 60, 'i'], ['r', 328, 771, 22, 46, 'i'], ['[', 357, 760, 0, 60], ['c', 388, 760, 26, 62, 'i'],
  ['<t−1>', 418, 743, 138, 50, 'i'], [',', 560, 760, 0, 60], ['x', 583, 760, 30, 62, 'i'], ['<t>', 618, 743, 82, 50, 'i'],
  [']', 703, 760, 0, 60], ['+', 738, 762, 42, 62], ['b', 797, 760, 28, 62, 'i'], ['r', 827, 771, 22, 46, 'i'], [')', 856, 760, 0, 60],

  ['c', 80, 922, 26, 62, 'i'], ['<t>', 111, 905, 82, 50, 'i'], ['=', 214, 924, 38, 62], ['Γ', 273, 922, 28, 62], ['u', 300, 933, 27, 46, 'i'],
  ['*', 332, 932, 24, 56], ['c̃', 373, 922, 26, 62, 'i'], ['<t>', 402, 905, 82, 50, 'i'], ['+', 502, 924, 42, 62], ['(1', 562, 922, 50, 60],
  ['−', 630, 924, 42, 62], ['Γ', 686, 922, 28, 62], ['u', 713, 933, 28, 46, 'i'], [')', 746, 922, 0, 60], ['*', 780, 932, 24, 56],
  ['c', 823, 922, 26, 62, 'i'], ['<t−1>', 852, 905, 138, 50, 'i'],

  ['a', 95, 1080, 28, 62, 'i'], ['<t>', 127, 1062, 82, 50, 'i'], ['=', 230, 1082, 42, 62], ['c', 290, 1080, 26, 62, 'i'], ['<t>', 321, 1062, 82, 50, 'i'],

  ['[Hochreiter & Schmidhuber 1997. Long short-term memory]', 58, 1337, 1232, 48],
];

const inked: Token[] = [
  ['c', 284, 430, 40, 64], ['~', 288, 392, 30, 40], ['<t>', 328, 396, 86, 50], ['=', 424, 428, 32, 42], ['tanh', 482, 430, 118, 60],
  ['(', 618, 424, 0, 62], ['ω', 650, 428, 58, 58], ['c', 710, 432, 26, 34], ['[', 746, 422, 0, 54], ['a', 774, 424, 34, 54],
  ['<t-1>', 806, 400, 114, 50], [',', 920, 424, 0, 54], ['x', 950, 424, 36, 46], ['<t>', 996, 396, 72, 50], [']', 1078, 424, 0, 58],
  ['+', 1128, 416, 28, 42], ['b', 1178, 422, 30, 60], ['c', 1216, 424, 30, 32], [')', 1256, 420, 0, 60],

  ['Γ', 270, 598, 50, 106], ['u', 324, 594, 28, 46], ['=', 356, 582, 30, 42], ['σ', 412, 574, 44, 44], ['(', 478, 566, 0, 82],
  ['W', 510, 570, 50, 56], ['u', 566, 576, 30, 46], ['[', 614, 566, 0, 70], ['a', 666, 568, 42, 68], ['<t-1>', 718, 540, 130, 52],
  [',', 852, 566, 0, 54], ['x', 896, 570, 34, 46], ['<t>', 950, 534, 70, 50], [']', 1030, 574, 0, 86], ['+', 1096, 572, 32, 44],
  ['b', 1166, 582, 32, 62], ['u', 1202, 584, 30, 40], [')', 1242, 586, 0, 96],

  ['Γ', 270, 736, 50, 106], ['f', 304, 746, 24, 50], ['=', 352, 706, 26, 36], ['σ', 408, 712, 40, 54], ['(', 478, 712, 0, 92],
  ['ω', 512, 710, 56, 60], ['f', 572, 718, 22, 42], ['[', 614, 704, 0, 66], ['a', 664, 704, 40, 62], ['<t-1>', 704, 684, 102, 50],
  [',', 812, 716, 0, 54], ['x', 854, 714, 36, 48], ['<t>', 900, 686, 62, 46], [']', 990, 732, 0, 96], ['+', 1036, 722, 30, 42],
  ['b', 1094, 722, 44, 92], ['f', 1154, 732, 26, 44], [')', 1200, 726, 0, 98],

  ['Γ', 278, 872, 42, 88], ['o', 316, 870, 26, 38], ['=', 360, 854, 26, 36], ['σ', 444, 852, 40, 40], ['(', 514, 856, 0, 92],
  ['W', 552, 860, 48, 60], ['o', 610, 870, 28, 40], ['[', 660, 850, 0, 68], ['a', 712, 854, 36, 60], ['<t-1>', 750, 822, 114, 50],
  [',', 868, 854, 0, 50], ['x', 896, 852, 36, 46], ['<t>', 946, 818, 70, 50], [']', 1036, 854, 0, 86], ['+', 1068, 856, 46, 66],
  ['b', 1134, 852, 36, 68], ['o', 1184, 860, 22, 30], [')', 1214, 856, 0, 92],

  ['c', 256, 992, 44, 72], ['<t>', 302, 960, 92, 58], ['=', 412, 982, 30, 42], ['Γ', 478, 1000, 42, 92], ['u', 522, 1008, 32, 48],
  ['*', 574, 1004, 46, 80], ['c', 652, 990, 50, 68], ['~', 650, 956, 38, 44], ['<t>', 706, 960, 108, 58], ['+', 832, 986, 36, 48],
  ['Γ', 920, 1000, 52, 112], ['f', 962, 1004, 30, 46], ['*', 1022, 996, 32, 66], ['c', 1094, 988, 40, 68], ['<t-1>', 1142, 958, 134, 54],

  ['a', 270, 1154, 58, 78], ['<t>', 322, 1112, 88, 54], ['=', 424, 1164, 34, 48], ['Γ', 482, 1176, 64, 112], ['o', 532, 1180, 32, 44],
  ['*', 586, 1172, 42, 80], ['c', 652, 1162, 52, 80], ['<t>', 702, 1116, 106, 58],
];

const corrected: Token[] = [
  ['Γ', 870, 1298, 72, 118], ['o', 914, 1314, 30, 58], ['*', 970, 1300, 34, 96], ['tanh', 1006, 1284, 130, 84], ['c', 1152, 1284, 40, 78], ['<t>', 1192, 1244, 62, 64],
];

const Slide = () => (
  <svg width="788" height="444" viewBox="51 24 2364 1332">
    <Glyphs tokens={printed} font={SERIF} fill="#0a0a0a" pen={0.6} />
    <Glyphs tokens={[['Andrew Ng', 2173, 1334, 224, 45]]} font={HAND} fill="#0a0a0a" />
    <Glyphs tokens={inked} font={HAND} fill="#2f74c8" dx={960} weight={300} pen={1.3} />
    <Glyphs tokens={corrected} font={HAND} fill="#d42c30" dx={960} />
    <g fontFamily={HAND} fill="#2f74c8" stroke="#2f74c8" strokeWidth="1.300" fontSize="52" fontWeight="300">
      <text transform="translate(1014 606) rotate(-11)" textLength="174" lengthAdjust="spacingAndGlyphs">(updat-)</text>
      <text transform="translate(986 744) rotate(-13)" textLength="184" lengthAdjust="spacingAndGlyphs">(forget)</text>
      <text transform="translate(1008 878) rotate(-10)" textLength="186" lengthAdjust="spacingAndGlyphs">(output)</text>
      <text x="686" y="1130" fontSize="70" textLength="32" lengthAdjust="spacingAndGlyphs">Γ</text>
      <text x="722" y="1142" fontSize="48">f</text>
    </g>
    <g fill="none" stroke="#2f74c8" strokeWidth="4.200" strokeLinecap="round" strokeLinejoin="round">
      <path d="M391 320q88 6 174 4M92 456q60 5 122 4M524 462l12 6 10-7 10 7 10-7 14-2M633 450q80 6 154 6M94 638l46 1M94 793l42 2" />
      <path d="M82 942q54-2 104 7M272 950q20 8 38 9M378 950q44 4 88 0M100 1101q60 1 130-3t152-3" />
      <path d="M292 854c-30 0-41 26-41 60s18 66 48 66 48-32 48-66-24-64-56-60" />
      <path d="M613 842c-26-18-54-4-68 20-14 26-18 64 4 92 30 26 120 24 164 28 36-4 68-30 86-52 10-34-24-96-62-108-34-10-74-6-102-2M562 955q80 4 186 9" />
      <path d="M435 1054q-46-46-94-82l36 6M341 972l5 34M697 1060l-18-56-17 24M679 1002l24 18" />
      <path d="M2245 495q30-6 45 12c-2 50-24 90-24 132l20 32-18 12c-6 40 8 90 10 156q-16 16-34 24" />
      <path d="M1462 1033q24 4 52 1M1626 1023h130M1886 1030l72 3M2076 1018l133 1" />
      <path d="M1394 1306q-36 4-72 6M1358 1292q-20 8-36 18l48 17" />
    </g>
    <path d="M1578 1066c-6-16-66-8-118 0-24 20-38 60-34 90 6 40 34 58 70 68 60 14 130 14 180 2 70-24 140-60 176-90 20-24 26-36 16-52-40-32-110-36-172-32-50 4-80 18-118 14" fill="none" stroke="#d42c30" strokeWidth="5.500" strokeLinejoin="round" />
  </svg>
);

/* ---------- app ---------- */

export default function App() {
  return (
    <Page>
      <Global />
      <BrowserChrome />
      <SiteHeader>
        <svg width="128" height="36" viewBox="0 0 128 36">
          <text x="-1" y="27" fontFamily="Lato, sans-serif" fontSize="36" fontWeight="900" fill="#2455cc" textLength="130" lengthAdjust="spacingAndGlyphs">coursera</text>
        </svg>
        <VLine $h={25} $ml={23} $mr={25} />
        <svg width="127" height="32" viewBox="0 0 127 32">
          <rect width="127" height="32" fill="#4c70b3" />
          <path d="M0 0h76q-6 7-18 7-10-2-22-1-12 2-22 9-6 3-14 3z" fill="#e0747a" />
        </svg>
        <SearchForm>
          <SearchInput>Search in course</SearchInput>
          <SearchButton>Search</SearchButton>
        </SearchForm>
        <HeaderRight>
          <Bell>
            <svg width="24" height="28" viewBox="0 0 24 28" fill="none" stroke="#333" strokeWidth="1.100"><path d="M1 21q4-3 4-8 0-7 7-7t7 7q0 5 4 8zM9 21q0 4 3 4t3-4" /></svg>
            <BellBadge>1</BellBadge>
          </Bell>
          <VLine $h={40} $ml={21} $mr={24} />
          <svg width="41" height="40" viewBox="0 0 40 40">
            <circle cx="20" cy="20" r="20" fill="#61add8" />
            <ellipse cx="20" cy="14.500" rx="5.500" ry="6.500" fill="#fff" />
            <path d="M8.500 31.500q0-8 7.500-8.500 4 2 8 0 7.500.5 7.500 8.500z" fill="#fff" />
          </svg>
          <UserName>Babak Poursartip</UserName>
          <svg width="12" height="7" viewBox="0 0 12 7"><path d="M.7.700L6 6 11.300.7" fill="none" stroke="#555" strokeWidth="1.100" /></svg>
        </HeaderRight>
      </SiteHeader>

      <CrumbBar>
        <Crumb $w={102} $link>Sequence Models</Crumb>
        <CrumbSep $ml={16} $mr={15}><Chevron w={9} h={14} color="#333" /></CrumbSep>
        <Crumb $w={42} $link>Week 1</Crumb>
        <CrumbSep $ml={16} $mr={7}><Chevron w={9} h={14} color="#333" /></CrumbSep>
        <Crumb $w={407}>Clarifications about Upcoming Long Short Term Memory (LSTM) Video</Crumb>
        <Pager>
          <Chevron w={9} h={14} left color="#2455cc" />
          <PagerText $w={53} $ml={12} $mr={32}>Previous</PagerText>
          <PagerText $w={28} $ml={0} $mr={12}>Next</PagerText>
          <Chevron w={9} h={14} color="#2455cc" />
        </Pager>
      </CrumbBar>

      <Columns>
        <Sidebar>
          <SectionTitle>Recurrent Neural Networks</SectionTitle>
          {lessons.map((l, i) => (
            <Item key={i} $active={l.active}>
              {l.todo ? <PlayDisc /> : <CheckDisc />}
              <ItemText>
                {l.lines.map((line, n) => (
                  <Line key={n}>{n === 0 && <b>{l.kind}</b>}{n === 0 && line ? ' ' + line : line}</Line>
                ))}
                <Duration>{l.time}</Duration>
              </ItemText>
            </Item>
          ))}
          <SectionTitle>Lecture Notes (Optional)</SectionTitle>
          <SectionTitle>Quiz</SectionTitle>
          <SectionTitle>Programming Assignments</SectionTitle>
        </Sidebar>
        <Track>
          <ArrowBox><ScrollArrow color="#a3a3a3" /></ArrowBox>
          <Thumb $mt={0} $h={1094} />
          <ArrowBox $bottom><ScrollArrow down color="#505050" /></ArrowBox>
        </Track>

        <Main>
          <Title>Clarifications about Upcoming Long Short<br />Term Memory (LSTM) Video</Title>
          <Para $mt={51}>Correction in "Long Short Term Memory (LSTM)" (4:10):</Para>
          <Para $mt={20}>The last line should be:</Para>
          <FormulaBox>
            <svg width="340" height="69" viewBox="0 0 340 69"><Glyphs tokens={formula} font={SERIF} fill="#1f1f1f" /></svg>
          </FormulaBox>
          <Para $mt={10}>See also the correction in the screenshot below (in red ink).</Para>
          <SlideFrame><Slide /></SlideFrame>
          <Actions>
            <svg width="22" height="20" viewBox="0 0 22 20"><path d="M.8 10.500l7.700 8L21.500 1" fill="none" stroke="#3f7d52" strokeWidth="1.800" /></svg>
            <Done>Completed</Done>
            <NextButton>Go to next item</NextButton>
          </Actions>
          <Feedback>
            <FeedbackItem $w={85} $gap={9}><ThumbIcon />Like</FeedbackItem>
            <FeedbackItem $w={103} $gap={9}><ThumbIcon down />Dislike</FeedbackItem>
            <FeedbackItem $w={140} $gap={9}><FlagIcon />Report an issue</FeedbackItem>
          </Feedback>
        </Main>
        <Track>
          <ArrowBox><ScrollArrow color="#505050" /></ArrowBox>
          <Thumb $mt={30} $h={1118} />
          <ArrowBox $bottom><ScrollArrow down color="#a3a3a3" /></ArrowBox>
        </Track>
      </Columns>
    </Page>
  );
}
